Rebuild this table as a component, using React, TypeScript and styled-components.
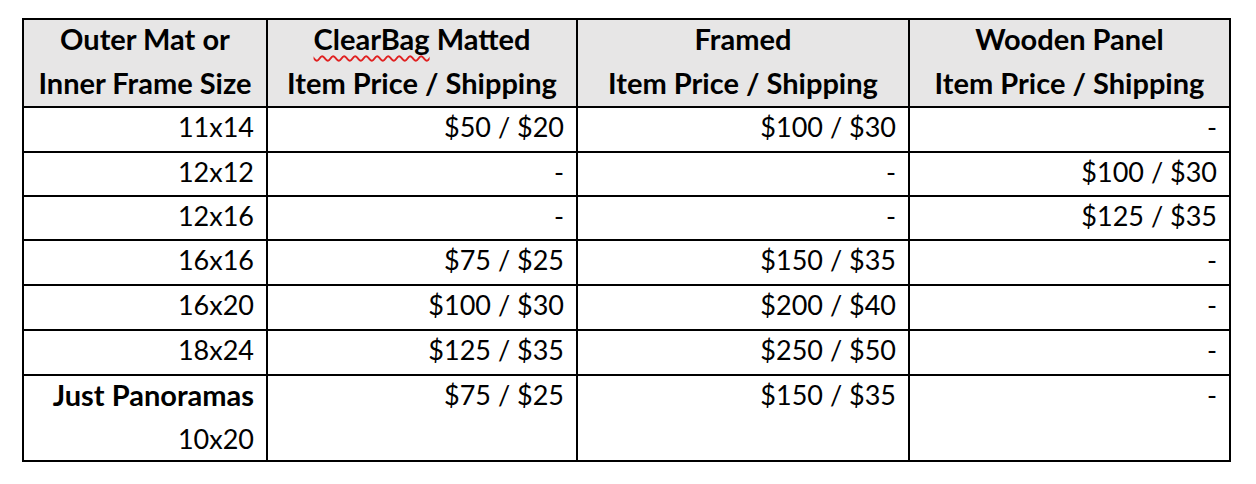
import React from "react";
import styled, { createGlobalStyle } from "styled-components";

const GlobalStyle = createGlobalStyle`
  html, body {
    margin: 0;
    padding: 0;
    background: #ffffff;
  }
  body {
    font-family: Lato, "Open Sans", "Liberation Sans", sans-serif;
    color: #000000;
  }
`;

const Page = styled.div`
  padding: 18px 0 0 22px;
`;

const Table = styled.table`
  border-collapse: collapse;
  table-layout: fixed;
  width: 1209px;
  font-size: 27px;
  color: #000;
`;

const Row = styled.tr<{ $h: number }>`
  height: ${(p) => p.$h}px;
`;

const HeadCell = styled.th`
  border: 2px solid #000;
  background: #e7e6e6;
  font-size: 29px;
  font-weight: 700;
  text-align: center;
  vertical-align: top;
  padding: 0 4px;
  white-space: nowrap;
`;

const Cell = styled.td`
  border: 2px solid #000;
  background: #fff;
  text-align: right;
  vertical-align: top;
  padding: 0 12px 0 6px;
  white-space: nowrap;
  font-weight: 400;
`;

const Line = styled.div<{ $bold?: boolean }>`
  display: block;
  line-height: 38px;
  font-weight: ${(p) => (p.$bold ? 700 : "inherit")};
  font-size: ${(p) => (p.$bold ? "29px" : "inherit")};
  & + & {
    margin-top: 6px;
  }
`;

const Squiggle = styled.span`
  text-decoration-line: underline;
  text-decoration-style: wavy;
  text-decoration-color: #e02020;
  text-decoration-thickness: 1.5px;
  text-underline-offset: 5px;
`;

type CellLine = { text: string; bold?: boolean };
type BodyRow = { h: number; size: CellLine[]; values: string[] };

const rows: BodyRow[] = [
  { h: 45, size: [{ text: "11x14" }], values: ["$50 / $20", "$100 / $30", "-"] },
  { h: 44, size: [{ text: "12x12" }], values: ["-", "-", "$100 / $30"] },
  { h: 44, size: [{ text: "12x16" }], values: ["-", "-", "$125 / $35"] },
  { h: 45, size: [{ text: "16x16" }], values: ["$75 / $25", "$150 / $35", "-"] },
  { h: 45, size: [{ text: "16x20" }], values: ["$100 / $30", "$200 / $40", "-"] },
  { h: 45, size: [{ text: "18x24" }], values: ["$125 / $35", "$250 / $50", "-"] },
  {
    h: 86,
    size: [{ text: "Just Panoramas", bold: true }, { text: "10x20" }],
    values: ["$75 / $25", "$150 / $35", "-"],
  },
];

export default function App() {
  return (
    <Page>
      <GlobalStyle />
      <Table>
        <colgroup>
          <col style={{ width: 244 }} />
          <col style={{ width: 310 }} />
          <col style={{ width: 332 }} />
          <col style={{ width: 321 }} />
        </colgroup>
        <thead>
          <Row $h={88}>
            <HeadCell>
              <Line>Outer Mat or</Line>
              <Line>Inner Frame Size</Line>
            </HeadCell>
            <HeadCell>
              <Line>
                <Squiggle>ClearBag</Squiggle> Matted
              </Line>
              <Line>Item Price / Shipping</Line>
            </HeadCell>
            <HeadCell>
              <Line>Framed</Line>
              <Line>Item Price / Shipping</Line>
            </HeadCell>
            <HeadCell>
              <Line>Wooden Panel</Line>
              <Line>Item Price / Shipping</Line>
            </HeadCell>
          </Row>
        </thead>
        <tbody>
          {rows.map((r, i) => (
            <Row key={i} $h={r.h}>
              <Cell>
                {r.size.map((l, j) => (
                  <Line key={j} $bold={l.bold}>
                    {l.text}
                  </Line>
                ))}
              </Cell>
              {r.values.map((v, j) => (
                <Cell key={j}>
                  <Line>{v}</Line>
                </Cell>
              ))}
            </Row>
          ))}
        </tbody>
      </Table>
    </Page>
  );
}
